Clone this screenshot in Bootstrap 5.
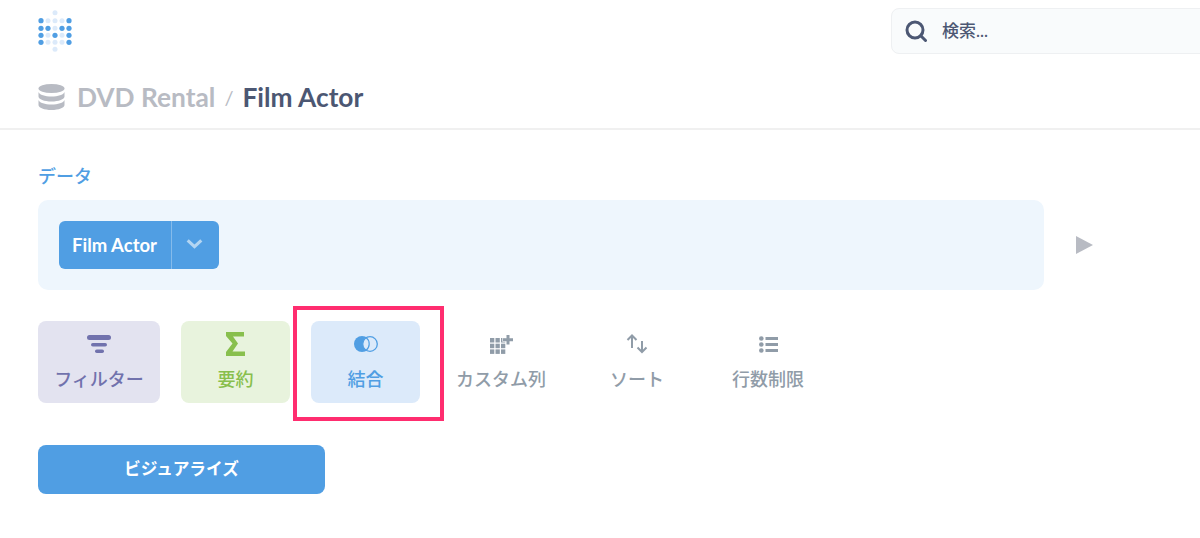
<!DOCTYPE html>
<html lang="ja">
<head>
<meta charset="utf-8">
<title>Film Actor</title>
<link href="https://cdn.jsdelivr.net/npm/bootstrap@5.3.0/dist/css/bootstrap.min.css" rel="stylesheet">
<style>
html,body{height:538px;overflow:hidden;}
body{background:#fff;font-family:"Lato","Noto Sans CJK JP",sans-serif;color:#4c5773;position:relative;}
.top-bar{height:130px;border-bottom:2px solid #f0f0f0;padding:8px 0 0 38px;}
.logo-box{width:36px;height:44px;}
.search-box{width:320px;height:46px;margin-right:-11px;background:#f9fbfc;border:1px solid #eef0f2;border-radius:8px 0 0 8px;padding-left:13px;gap:15px;font-size:17px;font-weight:500;color:#4c5773;}
.crumbs{margin-top:23px;height:40px;font-size:26.300px;font-weight:700;line-height:40px;}
.crumb-db{color:#b8bbc3;margin-left:12px;}
.crumb-sep{color:#b8bbc3;font-size:20px;font-weight:400;margin:0 9px 0 9px;}
.content-area{padding:33px 0 0 38px;}
.data-label{font-size:18px;font-weight:500;color:#509ee3;line-height:26px;height:26px;}
.data-row{margin-top:11px;}
.data-panel{width:1006px;height:90px;background:#eef6fd;border-radius:10px;padding:21px;}
.table-pill{width:160px;height:48px;background:#509ee3;border-radius:6px;color:#fff;font-size:18.500px;font-weight:700;}
.pill-name{width:113px;padding-left:13px;line-height:48px;border-right:1px solid #85bbeb;height:48px;white-space:nowrap;}
.pill-caret{width:47px;padding:0 3px 2px 0;}
.play-wrap{margin-left:32px;}
.step-row{margin-top:31px;height:82px;}
.step-btn{height:82px;border-radius:8px;font-size:18px;font-weight:500;padding-top:10px;text-align:center;line-height:1;}
.step-icon{height:26px;display:flex;align-items:center;justify-content:center;}
.step-text{margin-top:10px;line-height:24px;white-space:nowrap;}
.step-filter{width:122px;background:#e3e3f0;color:#7172ad;}
.step-sum{width:109px;margin-left:21px;background:#e8f3dd;color:#88bf4d;}
.step-join{width:109px;margin-left:21px;background:#dceafa;color:#509ee3;}
.step-plain{color:#909ca8;background:transparent;}
.step-custom{width:110px;margin-left:26px;}
.step-sort{width:90px;margin-left:36px;}
.step-limit{width:100px;margin-left:36px;}
.visual-btn{width:287px;height:49px;margin-top:42px;background:#509ee3;border-radius:8px;color:#fff;font-size:16.700px;font-weight:700;}
.visual-btn:hover{background:#509ee3;color:#fff;}
.hilite{position:absolute;left:293px;top:306px;width:151px;height:115px;border:4px solid #ff2d6f;pointer-events:none;}
</style>
</head>
<body>
<header class="top-bar">
  <div class="d-flex justify-content-between align-items-start">
    <svg class="logo-box" viewBox="1 0 36 44" aria-label="logo">
      <g fill="#dceafa">
        <circle cx="18" cy="4.700" r="2.500"/>
        <circle cx="11" cy="12.700" r="2.500"/><circle cx="18" cy="12.700" r="2.500"/><circle cx="25" cy="12.700" r="2.500"/>
        <circle cx="18" cy="20.300" r="2.500"/>
        <circle cx="11" cy="27.300" r="2.500"/><circle cx="25" cy="27.300" r="2.500"/>
        <circle cx="11" cy="34.300" r="2.500"/><circle cx="18" cy="34.300" r="2.500"/><circle cx="25" cy="34.300" r="2.500"/>
        <circle cx="18" cy="41.300" r="2.500"/>
      </g>
      <g fill="#509ee3">
        <circle cx="4" cy="12.700" r="2.600"/><circle cx="32" cy="12.700" r="2.600"/>
        <circle cx="4" cy="20.300" r="2.600"/><circle cx="11" cy="20.300" r="2.600"/><circle cx="25" cy="20.300" r="2.600"/><circle cx="32" cy="20.300" r="2.600"/>
        <circle cx="4" cy="27.300" r="2.600"/><circle cx="18" cy="27.300" r="2.600"/><circle cx="32" cy="27.300" r="2.600"/>
        <circle cx="4" cy="34.300" r="2.600"/><circle cx="32" cy="34.300" r="2.600"/>
      </g>
    </svg>
    <div class="search-box d-flex align-items-center">
      <svg width="22" height="22" viewBox="0 0 22 22" fill="none" stroke="#4c5773" stroke-width="3"><circle cx="10" cy="10" r="8"/><path d="M15.800 15.800 20.500 20.500" stroke-linecap="round"/></svg>
      <span>検索...</span>
    </div>
  </div>
  <div class="crumbs d-flex align-items-center">
    <svg width="27" height="26" viewBox="0 0 27 26" fill="#b8bbc3"><ellipse cx="13.500" cy="4.500" rx="13" ry="4.500"/><path d="M.5 8c1 2.800 6.500 4.500 13 4.500S25.500 10.800 26.500 8v4.500c0 2.800-5.800 5-13 5s-13-2.200-13-5z"/><path d="M.5 16c1 2.800 6.500 4.500 13 4.500S25.500 18.800 26.500 16v5c0 2.800-5.800 5-13 5s-13-2.200-13-5z"/></svg>
    <span class="crumb-db">DVD Rental</span><span class="crumb-sep">/</span><span>Film Actor</span>
  </div>
</header>
<main class="content-area">
  <div class="data-label">データ</div>
  <div class="data-row d-flex align-items-center">
    <div class="data-panel">
      <div class="table-pill d-flex">
        <div class="pill-name">Film Actor</div>
        <div class="pill-caret d-flex align-items-center justify-content-center">
          <svg width="17" height="10" viewBox="0 0 18 11" fill="none" stroke="#b3d5f2" stroke-width="3.400"><path d="M1.500 1.500 9 8.500 16.500 1.500"/></svg>
        </div>
      </div>
    </div>
    <svg class="play-wrap" width="17" height="18" viewBox="0 0 17 18" fill="#b8bbc3"><path d="M0 0 17 9 0 18z"/></svg>
  </div>
  <div class="step-row d-flex">
    <div class="step-btn step-filter">
      <div class="step-icon"><svg width="24" height="19" viewBox="0 0 24 19" fill="#7172ad"><rect x="0" y="0" width="24" height="5" rx="2.500"/><rect x="4" y="8" width="16" height="3.500" rx="1.750"/><rect x="8" y="14.500" width="9" height="3.500" rx="1.750"/></svg></div>
      <div class="step-text">フィルター</div>
    </div>
    <div class="step-btn step-sum">
      <div class="step-icon"><svg width="19" height="24" viewBox="0 0 19 24" fill="#88bf4d"><path d="M0 0H18V4.500H7L12 11.500 6.500 19.500H19V24H0V20L6.500 11.500 0 4z"/></svg></div>
      <div class="step-text">要約</div>
    </div>
    <div class="step-btn step-join">
      <div class="step-icon"><svg width="24" height="16" viewBox="0 0 24 16"><circle cx="8" cy="8" r="8" fill="#509ee3"/><circle cx="16" cy="8" r="7.300" fill="#dceafa" stroke="#509ee3" stroke-width="1.300"/><path d="M12 1.600A8 8 0 0 1 12 14.400" fill="none" stroke="#509ee3" stroke-width="1.200"/></svg></div>
      <div class="step-text">結合</div>
    </div>
    <div class="step-btn step-plain step-custom">
      <div class="step-icon"><svg width="23" height="19" viewBox="0 0 23 19" fill="#909ca8"><rect x="0" y="3" width="4.300" height="4.500"/><rect x="5.500" y="3" width="4.300" height="4.500"/><rect x="11" y="3" width="4.300" height="4.500"/><rect x="0" y="8.700" width="4.300" height="4.500"/><rect x="5.500" y="8.700" width="4.300" height="4.500"/><rect x="11" y="8.700" width="4.300" height="4.500"/><rect x="0" y="14.400" width="4.300" height="4.500"/><rect x="5.500" y="14.400" width="4.300" height="4.500"/><rect x="11" y="14.400" width="4.300" height="4.500"/><path d="M16.500 0h3v3.200H23v3h-3.500v3.300h-3V6.200H13v-3h3.500z" stroke="#fff" stroke-width="1.200" paint-order="stroke"/></svg></div>
      <div class="step-text">カスタム列</div>
    </div>
    <div class="step-btn step-plain step-sort">
      <div class="step-icon"><svg width="22" height="20" viewBox="0 0 22 20" fill="none" stroke="#909ca8" stroke-width="2"><path d="M6 14V1.500M1.500 6 6 1.500 10.500 6M16 7v11M11.500 13.500 16 18l4.500-4.500"/></svg></div>
      <div class="step-text">ソート</div>
    </div>
    <div class="step-btn step-plain step-limit">
      <div class="step-icon"><svg width="19" height="17" viewBox="0 0 19 17" fill="#909ca8"><circle cx="2.300" cy="2.500" r="2.300"/><circle cx="2.300" cy="8.500" r="2.300"/><circle cx="2.300" cy="14.500" r="2.300"/><rect x="6.500" y="1" width="12.500" height="3"/><rect x="6.500" y="7" width="12.500" height="3"/><rect x="6.500" y="13" width="12.500" height="3"/></svg></div>
      <div class="step-text">行数制限</div>
    </div>
  </div>
  <button type="button" class="btn visual-btn d-block border-0 p-0">ビジュアライズ</button>
</main>
<div class="hilite"></div>
<script src="https://cdn.jsdelivr.net/npm/bootstrap@5.3.0/dist/js/bootstrap.bundle.min.js"></script>
</body>
</html>
